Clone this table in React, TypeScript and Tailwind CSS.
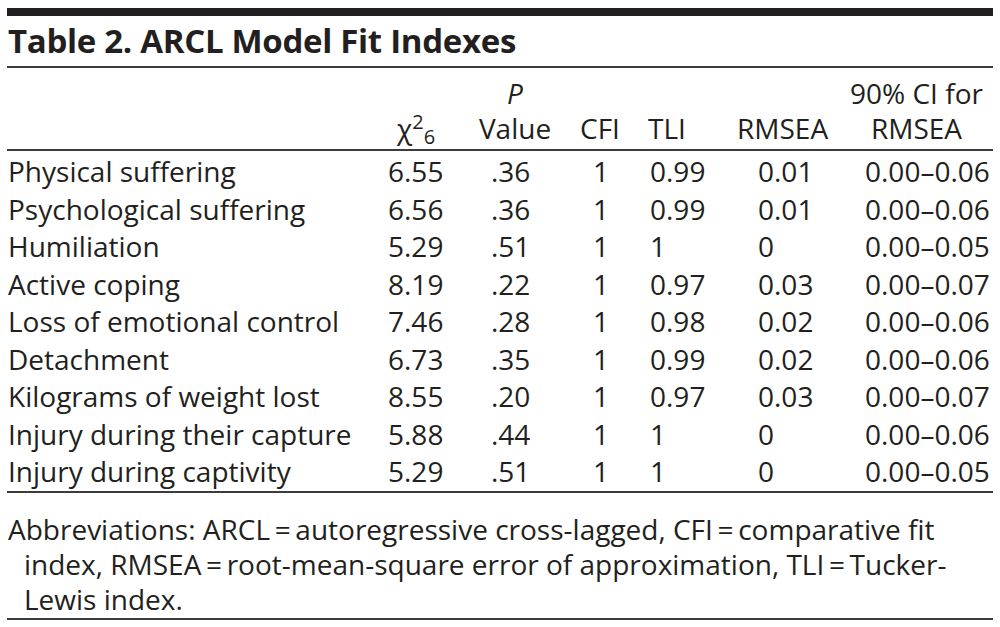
const rows: [string, string, string, string, string, string, string][] = [
  ['Physical suffering', '6.55', '.36', '1', '0.99', '0.01', '0.00–0.06'],
  ['Psychological suffering', '6.56', '.36', '1', '0.99', '0.01', '0.00–0.06'],
  ['Humiliation', '5.29', '.51', '1', '1', '0', '0.00–0.05'],
  ['Active coping', '8.19', '.22', '1', '0.97', '0.03', '0.00–0.07'],
  ['Loss of emotional control', '7.46', '.28', '1', '0.98', '0.02', '0.00–0.06'],
  ['Detachment', '6.73', '.35', '1', '0.99', '0.02', '0.00–0.06'],
  ['Kilograms of weight lost', '8.55', '.20', '1', '0.97', '0.03', '0.00–0.07'],
  ['Injury during their capture', '5.88', '.44', '1', '1', '0', '0.00–0.06'],
  ['Injury during captivity', '5.29', '.51', '1', '1', '0', '0.00–0.05'],
]

// grid columns: label | χ² | P | CFI | TLI | RMSEA | 90% CI
const cols = 'grid grid-cols-[368px_95px_90px_75px_100px_105px_1fr]'

export default function App() {
  return (
    <div className="h-[627px] w-[1000px] bg-white px-[7px] pt-[8px] font-['Open_Sans',sans-serif] text-[#231f20]">
      <div className="h-[8px] bg-[#231f20]" />
      <h1 className="pl-px text-[33px] font-bold leading-[50px] tracking-[-0.3px]">
        Table 2. ARCL Model Fit Indexes
      </h1>
      <div className="h-[2px] bg-[#3c3c3c]" />

      <div className={`${cols} pt-[8px] pb-[4px] text-[28px] leading-[34.5px]`}>
        <div />
        <div className="self-end pl-[22px]">
          χ<sup className="text-[20px]">2</sup>
          <sub className="text-[20px]">6</sub>
        </div>
        <div className="text-center">
          <div className="italic">P</div>
          <div>Value</div>
        </div>
        <div className="self-end pl-[20px]">CFI</div>
        <div className="self-end pl-[13px]">TLI</div>
        <div className="self-end pl-[2px]">RMSEA</div>
        <div className="text-center">
          <div>90% CI for</div>
          <div>RMSEA</div>
        </div>
      </div>
      <div className="h-[2px] bg-[#3c3c3c]" />

      <div className="pt-[2px] text-[28px] leading-[37.5px]">
        {rows.map((r) => (
          <div key={r[0]} className={cols}>
            <div className="pl-px whitespace-nowrap">{r[0]}</div>
            <div className="pl-[13px]">{r[1]}</div>
            <div className="pl-[21px]">{r[2]}</div>
            <div className="pl-[33px]">{r[3]}</div>
            <div className="pl-[15px]">{r[4]}</div>
            <div className="pl-[23px]">{r[5]}</div>
            <div className="pl-[25px] whitespace-nowrap">{r[6]}</div>
          </div>
        ))}
      </div>
      <div className="h-[2px] bg-[#3c3c3c]" />

      <div className="pt-[19px] pb-px text-[28px] leading-[35px] whitespace-nowrap">
        <div className="pl-px">Abbreviations: ARCL{'\u2009=\u2009'}autoregressive cross-lagged, CFI{'\u2009=\u2009'}comparative fit</div>
        <div className="pl-[17px]">index, RMSEA{'\u2009=\u2009'}root-mean-square error of approximation, TLI{'\u2009=\u2009'}Tucker-</div>
        <div className="pl-[17px]">Lewis index.</div>
      </div>
      <div className="h-[2px] bg-[#3c3c3c]" />
    </div>
  )
}
